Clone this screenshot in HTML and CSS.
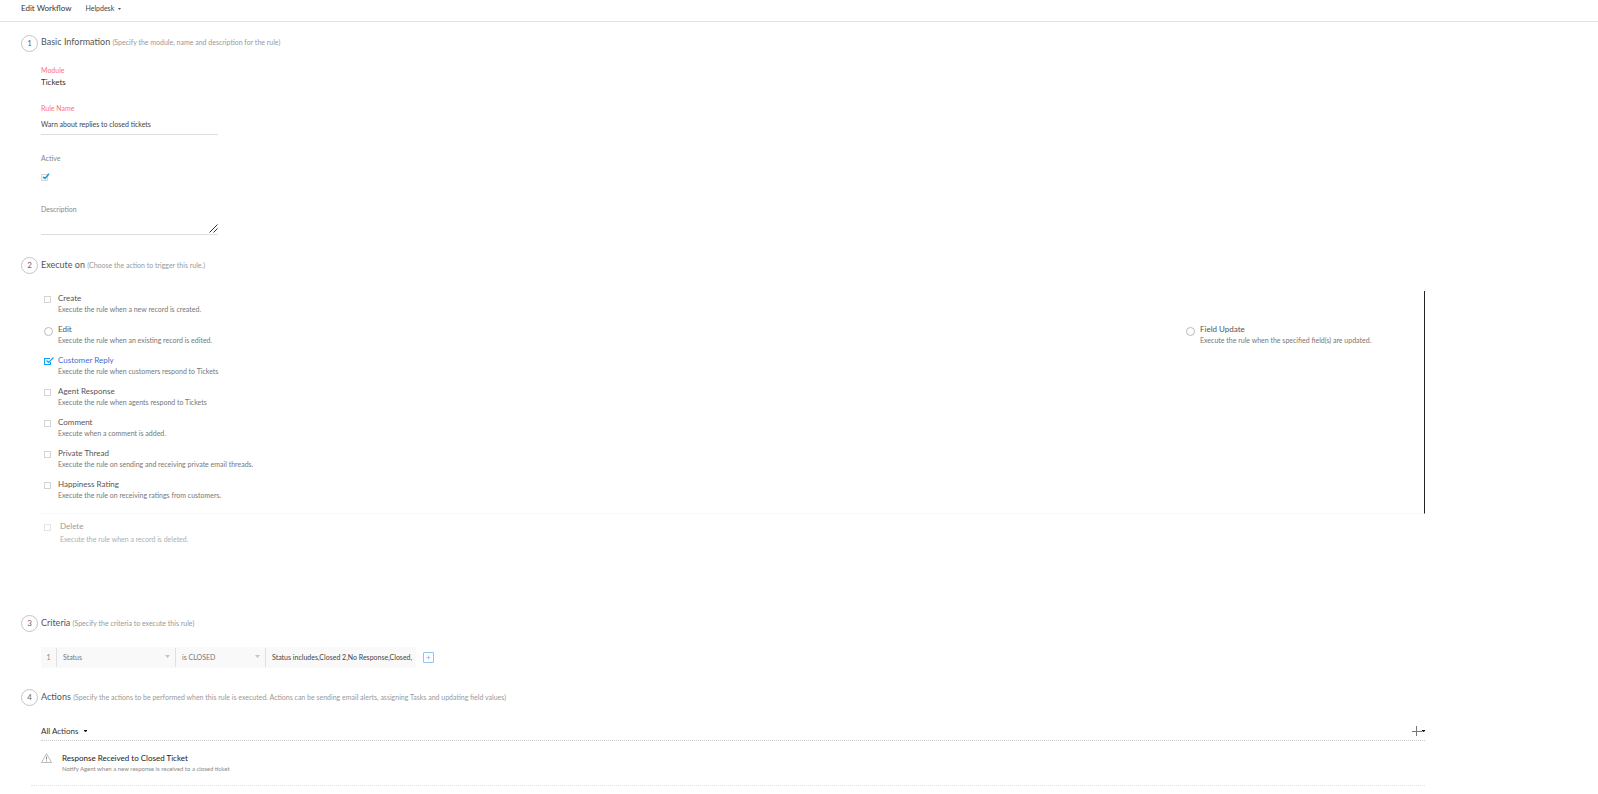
FILE: index.html
```
<!DOCTYPE html>
<html lang="en">
<head>
<meta charset="utf-8">
<title>Edit Workflow</title>
<link rel="stylesheet" href="styles.css">
</head>
<body>
<header class="topbar">
  <h1 class="topbar-title">Edit Workflow</h1>
  <button class="dept" type="button">Helpdesk
    <svg class="caret-sm" viewBox="0 0 3 2"><path d="M0 0h3L1.500 2z" fill="#555"/></svg>
  </button>
</header>
<main class="page">
  <section class="step step-basic">
    <div class="step-head"><span class="step-num">1</span><h2 class="step-title">Basic Information <small class="step-note">(Specify the module, name and description for the rule)</small></h2></div>
    <div class="fields">
      <div class="field field-module"><span class="label required">Module</span><span class="module">Tickets</span></div>
      <div class="field field-name"><label class="label required" for="rule">Rule Name</label><input class="text-input" id="rule" type="text" value="Warn about replies to closed tickets"></div>
      <div class="field field-active"><label class="label" for="active">Active</label><input class="tick active-tick" id="active" type="checkbox" checked></div>
      <div class="field field-desc"><label class="label" for="desc">Description</label>
        <div class="area-wrap"><textarea class="area" id="desc" rows="1"></textarea>
        <svg class="grip" viewBox="0 0 9 9"><path d="M0.500 8.500l8-8M4.500 8.500l4-4" stroke="#333" fill="none"/></svg></div></div>
    </div>
  </section>

  <section class="step step-execute">
    <div class="step-head"><span class="step-num">2</span><h2 class="step-title">Execute on <small class="step-note">(Choose the action to trigger this rule.)</small></h2></div>
    <div class="options">
      <div class="option"><input class="tick" type="checkbox" id="o1"><label class="option-text" for="o1"><span class="option-title">Create</span><span class="option-desc">Execute the rule when a new record is created.</span></label></div>
      <div class="option-pair">
        <div class="option"><input class="radio" type="radio" name="edit" id="o2"><label class="option-text" for="o2"><span class="option-title">Edit</span><span class="option-desc">Execute the rule when an existing record is edited.</span></label></div>
        <div class="option option-right"><input class="radio" type="radio" name="edit" id="o3"><label class="option-text" for="o3"><span class="option-title">Field Update</span><span class="option-desc">Execute the rule when the specified field(s) are updated.</span></label></div>
      </div>
      <div class="option selected"><input class="tick" type="checkbox" id="o4" checked><label class="option-text" for="o4"><span class="option-title">Customer Reply</span><span class="option-desc">Execute the rule when customers respond to Tickets</span></label></div>
      <div class="option"><input class="tick" type="checkbox" id="o5"><label class="option-text" for="o5"><span class="option-title">Agent Response</span><span class="option-desc">Execute the rule when agents respond to Tickets</span></label></div>
      <div class="option"><input class="tick" type="checkbox" id="o6"><label class="option-text" for="o6"><span class="option-title">Comment</span><span class="option-desc">Execute when a comment is added.</span></label></div>
      <div class="option"><input class="tick" type="checkbox" id="o7"><label class="option-text" for="o7"><span class="option-title">Private Thread</span><span class="option-desc">Execute the rule on sending and receiving private email threads.</span></label></div>
      <div class="option"><input class="tick" type="checkbox" id="o8"><label class="option-text" for="o8"><span class="option-title">Happiness Rating</span><span class="option-desc">Execute the rule on receiving ratings from customers.</span></label></div>
    </div>
    <div class="option option-delete"><input class="tick" type="checkbox" id="o9" disabled><label class="option-text" for="o9"><span class="option-title">Delete</span><span class="option-desc">Execute the rule when a record is deleted.</span></label></div>
  </section>

  <section class="step step-criteria">
    <div class="step-head"><span class="step-num">3</span><h2 class="step-title">Criteria <small class="step-note">(Specify the criteria to execute this rule)</small></h2></div>
    <div class="criteria">
      <div class="criteria-row">
        <span class="crit-index">1</span>
        <div class="crit-cell crit-field"><select class="crit-select" aria-label="Field"><option>Status</option></select><svg class="crit-caret" viewBox="0 0 5 3"><path d="M0 0h5L2.500 3z" fill="#c4c4c4"/></svg></div>
        <div class="crit-cell crit-op"><select class="crit-select" aria-label="Condition"><option>is CLOSED</option></select><svg class="crit-caret" viewBox="0 0 5 3"><path d="M0 0h5L2.500 3z" fill="#c4c4c4"/></svg></div>
        <input class="crit-value" type="text" aria-label="Value" value="Status includes,Closed 2,No Response,Closed,">
      </div>
      <button class="crit-add" type="button" aria-label="Add criterion"><svg viewBox="0 0 5 5"><path d="M.5 2.500h4M2.500 .5v4" stroke="#b9bdec" stroke-width="1"/></svg></button>
    </div>
  </section>

  <section class="step step-actions">
    <div class="step-head"><span class="step-num">4</span><h2 class="step-title">Actions <small class="step-note">(Specify the actions to be performed when this rule is executed. Actions can be sending email alerts, assigning Tasks and updating field values)</small></h2></div>
    <div class="actions-bar">
      <button class="all-actions" type="button">All Actions <svg class="caret" viewBox="0 0 3 2"><path d="M0 0h3v1L1.500 2 0 1z" fill="#111"/></svg></button>
      <button class="add-action" type="button" aria-label="Add action"><svg viewBox="0 0 13 10"><path d="M0 5.500h10M4.500 0v10" stroke="#777" fill="none"/><path d="M10 4h3v1l-1.500 1L10 5z" fill="#111"/></svg></button>
    </div>
    <div class="action">
      <svg class="alert" viewBox="0 0 11 10"><path d="M5.500 .6L10.500 9.500H.5z" fill="none" stroke="#aaa" stroke-width=".8" stroke-linejoin="round"/><path d="M5.500 3.500v3M5.500 7.500v1" stroke="#888" fill="none"/></svg>
      <div class="action-text"><h3 class="action-title">Response Received to Closed Ticket</h3><p class="action-desc">Notify Agent when a new response is received to a closed ticket</p></div>
    </div>
  </section>
</main>
</body>
</html>
```
FILE: styles.css
```
* { box-sizing: border-box; }
body { margin: 0; background: #fff; color: #555; font: 7px/11px Lato, sans-serif; }
h1, h2, h3, p { margin: 0; font-weight: 400; }
button, input, select, textarea { margin: 0; padding: 0; border: 0; border-radius: 0; background: none; color: inherit; font: inherit; outline: 0; appearance: none; }
svg { display: block; flex: none; }

.topbar { display: flex; gap: 14px; height: 22px; padding: 3px 21px 0; border-bottom: 1px solid #e3e3e6; }
.topbar-title { color: #333; font-size: 8px; line-height: 11px; }
.dept { display: flex; align-items: center; gap: 4px; height: 11px; color: #444; }
.caret-sm { width: 3px; height: 2px; }

.page { padding: 13px 173px 0 21px; }
.step { padding-left: 20px; }
.step-head { display: flex; align-items: flex-start; gap: 3px; margin-left: -20px; height: 17px; }
.step-num { display: grid; place-items: center; flex: none; width: 17px; height: 17px; border: 1px solid #c4c4c4; border-radius: 50%; font-size: 8px; line-height: 9px; color: #666; padding-bottom: 1px; }
.step-title { padding-top: 2px; font-size: 9px; line-height: 12px; color: #555; }
.step-basic .step-title { padding-top: 1px; }
.step-note { font-size: 7px; color: #999; }

.fields { width: 177px; padding-top: 13px; }
.field { display: flex; flex-direction: column; align-items: flex-start; }
.label { height: 11px; color: #888; }
.required { color: #ff7272; }
.module { height: 12px; color: #333; font-size: 8px; line-height: 13px; }
.field-name { padding-top: 15px; }
.text-input { width: 100%; height: 21px; border-bottom: 1px solid #dddde4; color: #444; }
.field-active { padding-top: 18px; }
.active-tick { margin-top: 9px; }
.field-desc { padding-top: 23px; }
.area-wrap { position: relative; width: 100%; height: 20px; border-bottom: 1px solid #dddde4; }
.area { display: block; width: 100%; height: 19px; resize: none; }
.grip { position: absolute; right: 0; bottom: 1px; width: 9px; height: 9px; pointer-events: none; }

.tick { flex: none; width: 7px; height: 7px; border: 1px solid #d4d4d4; background-color: #fff; }
.radio { flex: none; width: 9px; height: 9px; border: 1px solid #bbb; border-radius: 50%; }
.active-tick { width: 9px; height: 8px; border: 0; background: url("data:image/svg+xml,%3Csvg xmlns='http://www.w3.org/2000/svg' viewBox='0 0 9 8'%3E%3Cpath d='M.5 1.500h6v6h-6z' fill='none' stroke='%23d4d4d4'/%3E%3Cpath d='M2 4L4 5.500 8 .7' fill='none' stroke='%231a9fe0' stroke-width='1.600'/%3E%3C/svg%3E"); }

.step-execute { padding-top: 22px; }
.options { margin-top: 17px; padding-bottom: 5px; border-right: 1px solid #222; border-bottom: 1px solid #f8f8f8; }
.option { display: flex; align-items: flex-start; height: 31px; padding-left: 3px; }
.option .tick, .option .radio { margin-top: 5px; }
.option-pair { display: flex; justify-content: space-between; }
.option-text { display: flex; flex-direction: column; padding: 2px 0 0 7px; }
.option-title { font-size: 8px; line-height: 11px; }
.option-desc { color: #777; }
.radio + .option-text { padding-left: 5px; }
.option-right { width: 238px; padding-left: 0; }
.selected .tick { width: 10px; height: 8px; margin-top: 4px; border: 0; background: url("data:image/svg+xml,%3Csvg xmlns='http://www.w3.org/2000/svg' viewBox='0 0 10 8'%3E%3Cpath d='M6 1.500H.5v6h6V5M2.500 3.500l2 2L9.500 .5' fill='none' stroke='%2314a0f0' stroke-width='1.200'/%3E%3C/svg%3E"); }
.selected .option-text { padding-left: 4px; }
.selected .option-title { color: #3f6fd0; }
.option-delete { height: 32px; padding-top: 5px; opacity: .6; }
.option-delete .option-text { gap: 2px; padding-left: 9px; }

.step-criteria { padding-top: 69px; }
.criteria { display: flex; align-items: center; gap: 7px; padding-top: 15px; }
.criteria-row { display: flex; align-items: center; width: 375px; height: 21px; background: #f9f9f9; }
.crit-index { width: 15px; text-align: center; color: #888; }
.crit-cell { position: relative; display: flex; align-items: center; height: 19px; border-left: 1px solid #e0e0e0; color: #777; }
.crit-field { width: 119px; }
.crit-op { width: 90px; }
.crit-select { width: 100%; height: 19px; padding-left: 6px; }
.crit-caret { position: absolute; right: 5px; top: 7px; width: 5px; height: 3px; pointer-events: none; }
.crit-value { flex: 1; min-width: 0; height: 19px; padding: 0 0 2px 6px; border-left: 1px solid #e0e0e0; color: #444; }
.crit-add { display: grid; place-items: center; width: 11px; height: 11px; border: 1px solid #8fc3f0; border-radius: 1px; }
.crit-add svg { width: 5px; height: 5px; }

.step-actions { padding-top: 21px; }
.actions-bar { display: flex; justify-content: space-between; align-items: center; height: 35px; padding-top: 16px; border-bottom: 1px dotted #ccc; color: #333; }
.all-actions { display: flex; align-items: center; gap: 6px; font-size: 8px; }
.caret { width: 3px; height: 2px; }
.add-action svg { width: 13px; height: 10px; }
.action { display: flex; gap: 10px; height: 45px; margin-left: -10px; padding: 12px 0 0 10px; border-bottom: 1px dotted #e2e2e2; }
.alert { width: 11px; height: 10px; }
.action-title { font-size: 8px; line-height: 11px; color: #222; }
.action-desc { font-size: 6px; line-height: 10px; color: #888; }
```
